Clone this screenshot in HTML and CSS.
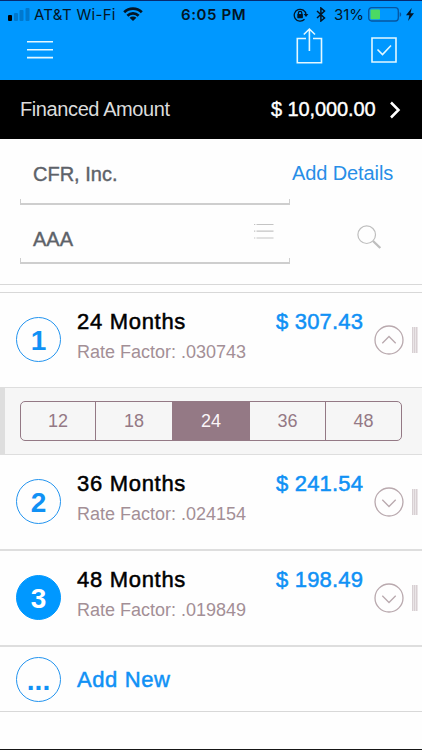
FILE: index.html
```html
<!DOCTYPE html>
<html lang="en">
<head>
<meta charset="utf-8">
<title>Financed Amount</title>
<link rel="stylesheet" href="styles.css">
</head>
<body>
<main class="screen">
  <header class="top">
    <div class="status">
      <svg class="signal" width="22" height="14" viewBox="0 0 22 14"><rect y="8" width="4" height="6" rx="1"/><g fill="#0078ce"><rect x="6" y="6" width="4" height="8" rx="1"/><rect x="11.500" y="3" width="4" height="11" rx="1"/><rect x="17.500" y="1" width="4" height="13" rx="1"/></g></svg>
      <span class="carrier">AT&amp;T Wi-Fi</span>
      <svg class="wifi" width="20" height="14" viewBox="0 0 20 14" fill="none" stroke="#031525" stroke-width="2.700"><path d="M1.200 5.200a12.500 12.500 0 0 1 17.600 0M4.400 8.700a8 8 0 0 1 11.200 0"/><path d="M6.600 10.800a4.800 4.800 0 0 1 6.800 0L10 14z" fill="#031525" stroke="none"/></svg>
      <span class="clock">6:05 PM</span>
      <svg class="lock" width="16" height="14" viewBox="0 0 16 14" fill="none" stroke="#031525" stroke-width="1.300"><path d="M11.500 11.200A5.900 5.900 0 1 1 13 6.500"/><path d="M10.700 6h4.600L13 9z" fill="#031525" stroke="none"/><path d="M5.400 6.500V5a1.700 1.700 0 0 1 3.400 0v1.500"/><rect x="4.300" y="6" width="5.600" height="4.200" rx=".6" fill="#031525" stroke="none"/></svg>
      <svg class="bt" width="10" height="15" viewBox="0 0 10 15" fill="none" stroke="#031525" stroke-width="1.500"><path d="M1 4l7.500 7-3.600 3V1l3.600 3L1 11"/></svg>
      <span class="percent">31%</span>
      <svg class="battery" width="34" height="15" viewBox="0 0 34 15"><rect x=".7" y=".7" width="29.600" height="13.300" rx="3" fill="none" stroke="#0755a0" stroke-width="1.300"/><rect x="2.500" y="2.500" width="9.500" height="9.700" rx="1" fill="#4bd964"/><path d="M31.700 5.200c2 .5 2 4 0 4.500z" fill="#0755a0"/></svg>
      <svg class="bolt" width="8" height="13" viewBox="0 0 8 13"><path d="M5.700 0L0 7.200h3.400L2.100 13 8 5.200H4.500z" fill="#031525"/></svg>
    </div>
    <nav class="nav">
      <svg class="menu" width="26" height="20" viewBox="0 0 26 20" stroke="#e3f8ff" stroke-width="1.600"><path d="M0 1.800h26M0 9.700h26M0 17.600h26"/></svg>
      <svg class="share" width="27" height="37" viewBox="0 0 27 37" fill="none" stroke="#e3f8ff" stroke-width="1.600"><path d="M10 11.500H1.300v24.300h24.200V11.500H17M13.400 24V2M7.800 7.500L13.400 2 19 7.500"/></svg>
      <svg class="check" width="26" height="26" viewBox="0 0 26 26" fill="none" stroke="#e3f8ff" stroke-width="1.600"><path d="M1 1h24v24H1zM6.500 12.500l5 5 8.500-9"/></svg>
    </nav>
  </header>

  <section class="amount">
    <span class="amount-label">Financed Amount</span>
    <span class="amount-value">$ 10,000.00</span>
    <svg width="11" height="18" viewBox="0 0 11 18" fill="none" stroke="#fff" stroke-width="2.500"><path d="M1 1.500L8.500 9 1 16.500"/></svg>
  </section>

  <section class="form">
    <div class="line">
      <div class="field"><span class="field-text name">CFR, Inc.</span></div>
      <a class="details">Add Details</a>
    </div>
    <div class="line second">
      <div class="field">
        <span class="field-text aaa">AAA</span>
        <svg class="list" width="21" height="18" viewBox="0 0 21 18" stroke="#c4c4c4" stroke-width="1.200"><path d="M1 2.500h1.300M3.500 2.500h17M1 9.200h1.300M3.500 9.200h17M1 16h1.300M3.500 16h17"/></svg>
      </div>
      <svg class="search" width="25" height="25" viewBox="0 0 25 25" fill="none" stroke="#bebebe"><circle cx="9.700" cy="9.700" r="8.800" stroke-width="1.200"/><path d="M16 16l7.300 7" stroke-width="2.400"/></svg>
    </div>
  </section>
  <div class="gap"></div>

  <section class="row">
    <div class="badge">1</div>
    <div class="info"><div class="months">24 Months</div><div class="rate">Rate Factor: .030743</div></div>
    <div class="price">$ 307.43</div>
    <svg class="toggle" width="30" height="30" viewBox="0 0 30 30" fill="none" stroke="#b9a9ae" stroke-width="1.300"><circle cx="15" cy="15" r="14"/><path d="M8.300 18.200L15 11.500l6.700 6.700"/></svg>
    <div class="grip"></div>
  </section>
  <section class="panel">
    <div class="segments"><span>12</span><span>18</span><span class="on">24</span><span>36</span><span>48</span></div>
  </section>
  <section class="row thick">
    <div class="badge">2</div>
    <div class="info"><div class="months">36 Months</div><div class="rate">Rate Factor: .024154</div></div>
    <div class="price">$ 241.54</div>
    <svg class="toggle" width="30" height="30" viewBox="0 0 30 30" fill="none" stroke="#b9a9ae" stroke-width="1.300"><circle cx="15" cy="15" r="14"/><path d="M8.300 12.800l6.700 6.700 6.700-6.700"/></svg>
    <div class="grip"></div>
  </section>
  <section class="row thick">
    <div class="badge filled">3</div>
    <div class="info"><div class="months">48 Months</div><div class="rate">Rate Factor: .019849</div></div>
    <div class="price">$ 198.49</div>
    <svg class="toggle" width="30" height="30" viewBox="0 0 30 30" fill="none" stroke="#b9a9ae" stroke-width="1.300"><circle cx="15" cy="15" r="14"/><path d="M8.300 12.800l6.700 6.700 6.700-6.700"/></svg>
    <div class="grip"></div>
  </section>
  <section class="add">
    <div class="badge dots">...</div>
    <span class="add-label">Add New</span>
  </section>
</main>
</body>
</html>
```
FILE: styles.css
```css
* { box-sizing: border-box; }
body { margin: 0; background: #fff; }
svg { display: block; flex: none; }
.screen {
  display: flex; flex-direction: column;
  width: 422px; height: 750px; overflow: hidden;
  background: #fefefe; border-bottom: 1px solid #161616;
  font-family: "Liberation Sans", Arial, sans-serif;
  white-space: nowrap;
}
.top { height: 80px; flex: none; background: #0098ff; border-top: 1px solid #062a70; }
.status {
  display: flex; align-items: center; height: 27px; padding-left: 8px;
  font: 15px/27px Inter, sans-serif; color: #031525;
}
.signal { margin-top: -1px; }
.carrier { width: 82px; margin-left: 4px; letter-spacing: .3px; }
.wifi { margin: -1px 0 0 7px; }
.clock { width: 66px; margin-left: 38px; font-weight: 600; letter-spacing: .6px; }
.lock { margin-left: 46px; }
.bt { margin-left: 7px; }
.percent { width: 30px; margin-left: 8px; }
.battery { margin-left: 4px; }
.bolt { margin-left: 4px; }
.nav { display: flex; align-items: flex-start; padding-left: 27px; }
.menu { margin-top: 12px; }
.share { margin-left: 243px; margin-top: -1px; }
.check { margin-left: 48px; margin-top: 9px; }
.amount {
  display: flex; align-items: center; flex: none; height: 59px;
  padding-left: 20px; background: #000; color: #fff;
}
.amount-label { width: 251px; font-size: 20px; color: #dcdcdc; letter-spacing: -.4px; }
.amount-value { width: 119px; font-size: 20px; letter-spacing: -.1px; -webkit-text-stroke: .4px #fff; }
.form { flex: none; height: 146px; border-bottom: 1px solid #d8d8d8; }
.line { display: flex; height: 66px; padding-left: 20px; }
.second { height: 59px; }
.field {
  display: flex; align-items: flex-start; width: 270px; height: 100%;
  border-bottom: 2px solid #cecece;
  background:
    linear-gradient(#cecece, #cecece) left bottom / 1px 4px no-repeat,
    linear-gradient(#cecece, #cecece) right bottom / 1px 4px no-repeat;
}
.field-text { width: 220px; margin: 23px 0 0 13px; font-size: 20px; line-height: 24px; color: #5d6269; -webkit-text-stroke: .4px #5d6269; }
.aaa { margin-top: 22px; }
.list { margin-top: 17px; }
.details { margin: 22px 0 0 2px; font-size: 20px; line-height: 24px; color: #278ee7; letter-spacing: -.1px; }
.search { margin: 20px 0 0 67px; }
.gap { flex: none; height: 8px; border-bottom: 1px solid #d8d8d8; }
.row { display: flex; flex: none; height: 94px; padding-left: 16px; }
.thick { height: 96px; border-bottom: 2px solid #dedede; }
.badge {
  flex: none; width: 45px; height: 45px; margin-top: 24px;
  border: 1.500px solid #2394ef; border-radius: 50%;
  font-size: 28px; font-weight: 700; line-height: 45px; text-align: center; color: #1091f5;
}
.filled { background: #0098ff; border-color: #0098ff; color: #fff; }
.info { width: 199px; margin: 16px 0 0 16px; }
.months { font-size: 22px; line-height: 26px; color: #000; letter-spacing: .7px; -webkit-text-stroke: .5px #000; }
.rate { margin-top: 5px; font-size: 18px; line-height: 24px; color: #a38f96; }
.price { width: 98px; margin-top: 16px; font-size: 22px; line-height: 26px; color: #1091f5; letter-spacing: .2px; -webkit-text-stroke: .5px #1091f5; }
.toggle { margin-top: 32px; }
.grip {
  width: 6px; height: 26px; margin: 34px 0 0 8px;
  background: repeating-linear-gradient(90deg, #d8d0d3 0 1px, #eae5e7 1px 2px);
}
.panel {
  flex: none; height: 68px; padding: 13px 20px 0 15px;
  background: #f6f6f6; border: solid #dedede; border-width: 1px 0 1px 5px;
}
.segments {
  display: grid; grid-template-columns: 74px 77px 77px 76px 1fr;
  height: 40px; overflow: hidden; border: 1.500px solid #947985; border-radius: 5px;
}
.segments span { font-size: 18px; line-height: 38px; text-align: center; color: #947985; }
.segments span + span { border-left: 1px solid #947985; }
.segments .on { background: #947985; color: #fbf5f8; }
.add { display: flex; flex: none; height: 65px; padding-left: 16px; border-bottom: 1px solid #d8d8d8; }
.add .badge { margin-top: 10px; }
.add-label { margin: 20px 0 0 16px; font-size: 22px; line-height: 26px; color: #1091f5; letter-spacing: .6px; -webkit-text-stroke: .5px #1091f5; }
```
